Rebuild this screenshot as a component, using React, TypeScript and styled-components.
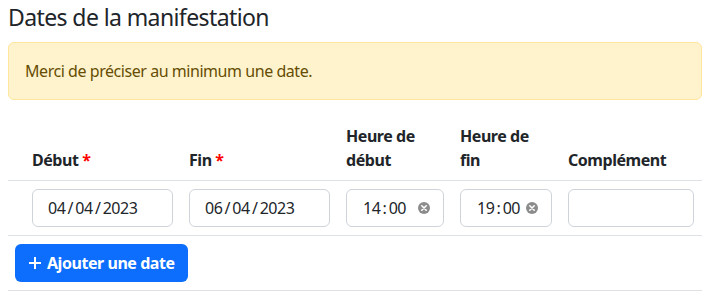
import styled, { createGlobalStyle } from "styled-components";

const GlobalStyle = createGlobalStyle`
  body {
    margin: 0;
    background: #fff;
    font-family: "Noto Sans", "Liberation Sans", sans-serif;
    color: #212529;
    letter-spacing: -0.45px;
  }
`;

const Wrapper = styled.div`
  padding: 0 5px 0 8px;
`;

const Title = styled.h3`
  font-size: 23px;
  font-weight: 400;
  line-height: 1.2;
  letter-spacing: -0.6px;
  margin: 4px 0 10px;
`;

const Alert = styled.div`
  background-color: #fff3cd;
  border: 1px solid #ffe69c;
  border-radius: 6px;
  color: #664d03;
  padding: 16px;
  font-size: 16px;
  line-height: 24px;
  margin-bottom: 16px;
`;

const cols = "16px 157px 157px 114px 108px 142px";

const Row = styled.div<{ head?: boolean }>`
  display: grid;
  grid-template-columns: ${cols};
  align-items: ${(p) => (p.head ? "end" : "center")};
  border-bottom: 1px solid #dee2e6;
`;

const HeadCell = styled.div`
  padding: 8px;
  font-weight: 700;
  font-size: 16px;
  line-height: 24px;
`;

const Required = styled.span`
  color: #ff0000;
`;

const Cell = styled.div`
  padding: 8px;
`;

const Field = styled.div<{ time?: boolean }>`
  box-sizing: border-box;
  height: 38px;
  border: 1px solid #ced4da;
  border-radius: 6px;
  display: flex;
  align-items: center;
  justify-content: space-between;
  padding: 0 ${(p) => (p.time ? "13px" : "12px")} 0 ${(p) => (p.time ? "16px" : "15px")};
  font-size: 16px;
  color: #212529;
  white-space: nowrap;
`;

const Clear = styled.svg`
  flex: none;
`;

const Footer = styled.div`
  padding: 8px 7px;
  border-bottom: 1px solid #dee2e6;
`;

const Button = styled.button`
  display: inline-flex;
  align-items: center;
  gap: 5px;
  height: 38px;
  padding: 0 13px;
  background-color: #0d6efd;
  color: #fff;
  border: none;
  border-radius: 6px;
  font-family: inherit;
  font-size: 16px;
  font-weight: 700;
  letter-spacing: -0.45px;
`;

function ClearIcon() {
  return (
    <Clear width="12" height="12" viewBox="0 0 12 12">
      <circle cx="6" cy="6" r="6" fill="#8c8c8c" />
      <path d="M3.8 3.8 L8.2 8.2 M8.2 3.8 L3.8 8.2" stroke="#fff" strokeWidth="1.6" strokeLinecap="round" />
    </Clear>
  );
}

const sep = (s: string, c: string) => s.split(c).join(`\u2009${c}\u2009`);

const rows = [{ start: "04/04/2023", end: "06/04/2023", from: "14:00", to: "19:00" }];

export default function App() {
  return (
    <Wrapper>
      <GlobalStyle />
      <Title>Dates de la manifestation</Title>
      <Alert>Merci de préciser au minimum une date.</Alert>
      <Row head>
        <HeadCell />
        <HeadCell>
          Début <Required>*</Required>
        </HeadCell>
        <HeadCell>
          Fin <Required>*</Required>
        </HeadCell>
        <HeadCell>Heure de début</HeadCell>
        <HeadCell>Heure de fin</HeadCell>
        <HeadCell>Complément</HeadCell>
      </Row>
      {rows.map((r, i) => (
        <Row key={i}>
          <Cell />
          <Cell>
            <Field>{sep(r.start, "/")}</Field>
          </Cell>
          <Cell>
            <Field>{sep(r.end, "/")}</Field>
          </Cell>
          <Cell>
            <Field time>
              {sep(r.from, ":")}
              <ClearIcon />
            </Field>
          </Cell>
          <Cell>
            <Field time>
              {sep(r.to, ":")}
              <ClearIcon />
            </Field>
          </Cell>
          <Cell>
            <Field />
          </Cell>
        </Row>
      ))}
      <Footer>
        <Button>
          <svg width="14" height="14" viewBox="0 0 14 14">
            <path d="M7 1 V13 M1 7 H13" stroke="#fff" strokeWidth="2" />
          </svg>
          Ajouter une date
        </Button>
      </Footer>
    </Wrapper>
  );
}
